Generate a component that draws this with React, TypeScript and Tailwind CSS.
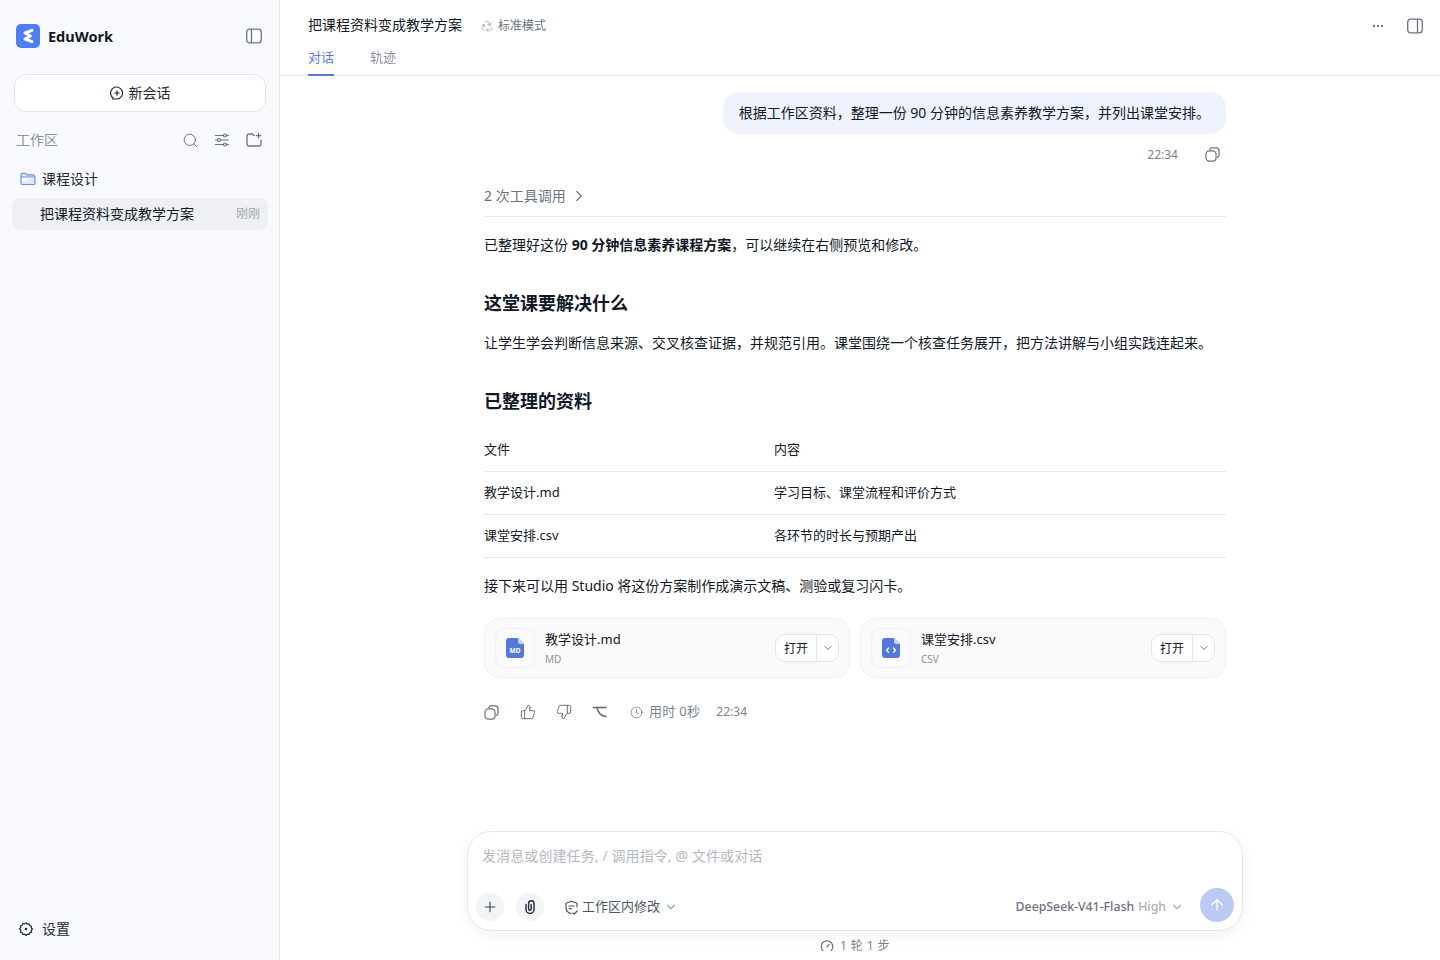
import { ArrowUp, ChevronDown, ChevronRight, Clock, Ellipsis, Plus, Recycle, Search, ThumbsDown, ThumbsUp } from "lucide-react";

const font = { fontFamily: '"Noto Sans", "Noto Sans CJK SC", sans-serif' };

const Logo = () => (
  <svg width="24" height="24" viewBox="0 0 24 24">
    <rect width="24" height="24" rx="5" fill="#4f7cf7" />
    <path d="M16 6.4 9 9l5.4 3L9 15l7 2.6" fill="none" stroke="#fff" strokeWidth="3" strokeLinecap="round" strokeLinejoin="round" />
  </svg>
);

const PanelIcon = ({ side }: { side: "left" | "right" }) => (
  <svg width="16" height="16" viewBox="0 0 16 16" fill="none" stroke="#6b7280" strokeWidth="1.3">
    <rect x="0.7" y="1.2" width="14.6" height="13.6" rx="3" />
    <path d={side === "left" ? "M5.5 1.2v13.6" : "M10.5 1.2v13.6"} />
  </svg>
);

const NewChatIcon = () => (
  <svg width="14" height="14" viewBox="0 0 14 14" fill="none" stroke="#1f2937" strokeWidth="1.2" strokeLinecap="round">
    <path d="M3.2 12A6 6 0 1 1 7 13H2.6" />
    <path d="M7 4.8v4.4M4.8 7h4.4" />
  </svg>
);

const SlidersIcon = () => (
  <svg width="16" height="16" viewBox="0 0 16 16" fill="none" stroke="#6b7280" strokeWidth="1.2" strokeLinecap="round">
    <path d="M1.5 3.5h8M12.5 3.5h2M1.5 8h2M6.5 8h8M1.5 12.5h8M12.5 12.5h2" />
    <circle cx="11" cy="3.5" r="1.5" />
    <circle cx="5" cy="8" r="1.5" />
    <circle cx="11" cy="12.5" r="1.5" />
  </svg>
);

const NewFolderIcon = () => (
  <svg width="16" height="16" viewBox="0 0 16 16" fill="none" stroke="#6b7280" strokeWidth="1.3" strokeLinecap="round" strokeLinejoin="round">
    <path d="M8.5 3.2H7.2L6 2H2.8A1.8 1.8 0 0 0 1 3.8v8.4A1.8 1.8 0 0 0 2.8 14h10.4a1.8 1.8 0 0 0 1.8-1.8V8.4" />
    <path d="M12.6 1.4v4.4M10.4 3.6h4.4" />
  </svg>
);

const FolderIcon = () => (
  <svg width="16" height="16" viewBox="0 0 16 16" fill="none" stroke="#6f8fe8" strokeWidth="1.2" strokeLinejoin="round">
    <path d="M1 12V4a1.6 1.6 0 0 1 1.6-1.6h3l1.4 1.4h6a1.6 1.6 0 0 1 1.6 1.6V6H1v6.2a1.4 1.4 0 0 0 1.4 1.3h11.2a1.4 1.4 0 0 0 1.4-1.3V6" fill="#dfe7fb" />
  </svg>
);

const CopyIcon = ({ size = 16 }: { size?: number }) => (
  <svg width={size} height={size} viewBox="0 0 16 16" fill="none" stroke="#6b7280" strokeWidth="1.3">
    <rect x="1" y="4.2" width="10.8" height="10.8" rx="3.6" />
    <path d="M5 2.6A2.6 2.6 0 0 1 7.4 1h4.4A3.2 3.2 0 0 1 15 4.2v4.4a2.6 2.6 0 0 1-1.6 2.4" strokeLinecap="round" />
  </svg>
);

const GearIcon = () => (
  <svg width="14" height="14" viewBox="0 0 14 14" fill="none" stroke="#1f2937" strokeWidth="1.2" strokeLinejoin="round">
    <path d="M7 .9l1.3 1.3 1.8-.3.7 1.7 1.7.7-.3 1.8L13.5 7l-1.3 1.3.3 1.8-1.7.7-.7 1.7-1.8-.3L7 13.5l-1.3-1.3-1.8.3-.7-1.7-1.7-.7.3-1.8L.5 7l1.3-1.3-.3-1.8 1.7-.7.7-1.7 1.8.3z" />
    <circle cx="7" cy="7" r="1.3" fill="#1f2937" stroke="none" />
  </svg>
);

const BranchIcon = () => (
  <svg width="16" height="16" viewBox="0 0 16 16" fill="none" stroke="#5f6672" strokeWidth="1.4" strokeLinecap="round" strokeLinejoin="round">
    <path d="M1.5 3.5h11" />
    <path d="M5 3.5c1 4.5 3.5 8 7.5 8.8" />
    <circle cx="13.6" cy="3.5" r="0.9" fill="#5f6672" stroke="none" />
    <circle cx="13.6" cy="12.4" r="0.9" fill="#5f6672" stroke="none" />
  </svg>
);

const ClipIcon = () => (
  <svg width="16" height="16" viewBox="0 0 16 16" fill="none" stroke="#1f2937" strokeWidth="1.4" strokeLinecap="round" strokeLinejoin="round">
    <path d="M4 5.5v5a4 4 0 0 0 8 0v-6a2.7 2.7 0 0 0-5.4 0V10a1.3 1.3 0 0 0 2.6 0V5.5" />
  </svg>
);

const ShieldIcon = () => (
  <svg width="15" height="15" viewBox="0 0 15 15" fill="none" stroke="#4b5563" strokeWidth="1.2" strokeLinecap="round" strokeLinejoin="round">
    <path d="M7.5 1.2l5.5 2v3.6M7 13.6C3.8 12.6 2 10.2 2 7.2v-4l5.5-2" />
    <path d="M5 6h5M5 8.6h2.4M9 13l1.2 1 3-3" />
  </svg>
);

const GaugeIcon = () => (
  <svg width="14" height="14" viewBox="0 0 14 14" fill="none" stroke="#6b7280" strokeWidth="1.2" strokeLinecap="round">
    <path d="M2.8 11.6A5.8 5.8 0 1 1 11.2 11.6" />
    <path d="M7 8l2.2-2.6" />
  </svg>
);

const FileIcon = ({ kind }: { kind: "md" | "csv" }) => (
  <svg width="18" height="20" viewBox="0 0 18 20">
    <path d="M3 0h9l6 6v11a3 3 0 0 1-3 3H3a3 3 0 0 1-3-3V3a3 3 0 0 1 3-3z" fill="#5578de" />
    <path d="M12 0l6 6h-4a2 2 0 0 1-2-2z" fill="#c5d3f7" />
    {kind === "md" ? (
      <text x="9" y="14.6" textAnchor="middle" fontSize="6.5" fontWeight="700" fill="#fff" fontFamily="Noto Sans">MD</text>
    ) : (
      <path d="M6.6 10 4.4 12.2l2.2 2.2M11.4 10l2.2 2.2-2.2 2.2" fill="none" stroke="#fff" strokeWidth="1.3" strokeLinecap="round" strokeLinejoin="round" />
    )}
  </svg>
);

const FileCard = ({ name, tag, kind }: { name: string; tag: string; kind: "md" | "csv" }) => (
  <div className="flex h-[60px] flex-1 items-center rounded-[16px] border border-[#efefef] bg-[#fafafa] pl-[10px] pr-[10px]">
    <div className="flex h-10 w-10 items-center justify-center rounded-[10px] border border-[#f0f0f0] bg-[#fafafa]">
      <FileIcon kind={kind} />
    </div>
    <div className="ml-[10px] flex-1">
      <div className="text-[13px] leading-[18px] text-[#111827]">{name}</div>
      <div className="mt-[3px] text-[10px] leading-[16px] text-[#8b93a1]">{tag}</div>
    </div>
    <div className="flex h-[28px] items-center rounded-[10px] border border-[#e5e5e5] bg-white">
      <span className="flex h-full w-[41px] items-center justify-center border-r border-[#e5e5e5] pt-[1px] text-[12px] text-[#111827]">打开</span>
      <span className="flex w-[21px] justify-center"><ChevronDown size={12} color="#6b7280" /></span>
    </div>
  </div>
);

const rows = [
  ["文件", "内容"],
  ["教学设计.md", "学习目标、课堂流程和评价方式"],
  ["课堂安排.csv", "各环节的时长与预期产出"],
];

export default function App() {
  return (
    <div className="flex h-screen overflow-hidden bg-white" style={font}>
      <aside className="flex w-[280px] shrink-0 flex-col border-r border-[#e5e7eb] bg-[#f8fafd]">
        <div className="flex h-[72px] items-center justify-between pl-4 pr-[17px]">
          <div className="flex items-center gap-2">
            <Logo />
            <span className="pt-[2px] text-[14.5px] font-bold text-[#111827]">EduWork</span>
          </div>
          <PanelIcon side="left" />
        </div>
        <div className="ml-[14px] mr-[13px] mt-[2px] flex h-[38px] items-center justify-center gap-[5px] rounded-[12px] border border-[#e2e4e8] bg-white text-[14px] text-[#1f2937]">
          <NewChatIcon />
          <span className="pb-[2px]">新会话</span>
        </div>
        <div className="mt-[18px] flex h-5 items-center justify-between pl-4 pr-[17px]">
          <span className="pb-[2px] text-[14px] text-[#8b93a1]">工作区</span>
          <div className="flex items-center gap-4">
            <Search size={17} color="#6b7280" strokeWidth={1.4} className="-mr-px" />
            <SlidersIcon />
            <NewFolderIcon />
          </div>
        </div>
        <div className="mt-[19px] flex h-5 items-center gap-[6px] pl-[20px] text-[14px] text-[#1f2937]">
          <FolderIcon />
          <span className="pb-[2px]">课程设计</span>
        </div>
        <div className="ml-3 mr-[11px] mt-[9px] flex h-8 items-center justify-between rounded-[8px] bg-[#eef0f3] pl-7 pr-2 text-[14px] text-[#111827]">
          <span className="pb-[2px]">把课程资料变成教学方案</span>
          <span className="text-[12px] text-[#a3a8b0]">刚刚</span>
        </div>
        <div className="mb-[21px] mt-auto flex h-5 items-center gap-[9px] pl-[19px] text-[14px] text-[#1f2937]">
          <GearIcon />
          <span className="pb-[2px]">设置</span>
        </div>
      </aside>

      <main className="flex min-w-0 flex-1 flex-col">
        <header className="h-[76px] shrink-0 border-b border-[#e5e7eb] pl-7 pr-[17px]">
          <div className="flex h-[50px] items-center pt-[2px]">
            <span className="pb-[4px] text-[14px] text-[#111827]">把课程资料变成教学方案</span>
            <span className="ml-[18px] flex items-center gap-[4px] text-[12px] text-[#6b7280]">
              <Recycle size={14} color="#9ca3af" strokeWidth={1.3} />
              标准模式
            </span>
            <span className="ml-auto flex items-center gap-[22px]">
              <Ellipsis size={14} color="#6b7280" />
              <PanelIcon side="right" />
            </span>
          </div>
          <div className="flex gap-9 text-[13px]">
            <span className="h-[26px] border-b-2 border-[#5a78e0] leading-[15px] text-[#5a78e0]">对话</span>
            <span className="leading-[15px] text-[#8b93a1]">轨迹</span>
          </div>
        </header>

        <div className="min-h-0 flex-1 overflow-hidden pr-[10px]">
          <div className="mx-auto w-[742px] pt-4 text-[14px] text-[#111827]">
            <div className="flex justify-end">
              <div className="flex h-[42px] items-center rounded-[16px] bg-[#edf2fd] px-4 pb-[2px]">根据工作区资料，整理一份 90 分钟的信息素养教学方案，并列出课堂安排。</div>
            </div>
            <div className="mt-[10px] flex h-5 items-center justify-end gap-[27px] pr-[6px] text-[12px] text-[#7b8390]">
              <span className="pt-[2px]">22:34</span>
              <CopyIcon size={15} />
            </div>
            <div className="mt-[22px] border-b border-[#e5e7eb] pb-[10px]">
              <div className="flex h-5 items-center gap-[4px] text-[#6b7280]">
                <span className="pb-[2px]">2 次工具调用</span>
                <ChevronRight size={18} strokeWidth={1.5} />
              </div>
            </div>
            <p className="mt-4 leading-6">已整理好这份 <strong className="font-bold">90 分钟信息素养课程方案</strong>，可以继续在右侧预览和修改。</p>
            <h2 className="mt-8 text-[18px] font-bold leading-7">这堂课要解决什么</h2>
            <p className="mt-[14px] leading-6">让学生学会判断信息来源、交叉核查证据，并规范引用。课堂围绕一个核查任务展开，把方法讲解与小组实践连起来。</p>
            <h2 className="mt-8 text-[18px] font-bold leading-7">已整理的资料</h2>
            <div className="mt-[14px] text-[13px]">
              {rows.map((r) => (
                <div key={r[0]} className="grid h-[43px] grid-cols-[290px_1fr] items-center border-b border-[#e5e7eb]">
                  <span>{r[0]}</span>
                  <span>{r[1]}</span>
                </div>
              ))}
            </div>
            <p className="mt-4 leading-6">接下来可以用 Studio 将这份方案制作成演示文稿、测验或复习闪卡。</p>
            <div className="mt-5 flex gap-[10px]">
              <FileCard name="教学设计.md" tag="MD" kind="md" />
              <FileCard name="课堂安排.csv" tag="CSV" kind="csv" />
            </div>
            <div className="mt-6 flex h-5 items-center text-[12px] text-[#7b8390]">
              <CopyIcon size={15} />
              <span className="ml-[21px]"><ThumbsUp size={16} color="#5f6672" strokeWidth={1.4} /></span>
              <span className="ml-[20px]"><ThumbsDown size={16} color="#5f6672" strokeWidth={1.4} /></span>
              <span className="ml-[20px]"><BranchIcon /></span>
              <span className="ml-[22px] flex items-center gap-[6px] text-[13px] tracking-[0.3px]"><Clock size={13} color="#6b7280" strokeWidth={1.4} />用时 0秒</span>
              <span className="ml-4">22:34</span>
            </div>
          </div>
        </div>

        <div className="shrink-0 pr-[10px]">
          <div className="mx-auto h-[100px] w-[776px] rounded-[24px] border border-[#e8e8e8] bg-white shadow-[0_4px_16px_rgba(0,0,0,0.05)]">
            <div className="pl-[14px] pt-[14px] text-[14px] leading-5 tracking-[0.1px] text-[#b4b8bf]">发消息或创建任务, / 调用指令, @ 文件或对话</div>
            <div className="mt-[22px] flex items-start pl-[8px] pr-[8px]">
              <span className="mt-[5px] flex h-7 w-7 items-center justify-center rounded-full bg-[#f3f4f6]"><Plus size={16} color="#374151" strokeWidth={1.6} /></span>
              <span className="ml-3 mt-[5px] flex h-7 w-7 items-center justify-center rounded-full bg-[#f3f4f6]"><ClipIcon /></span>
              <span className="ml-[20px] mt-[5px] flex h-7 items-center gap-[3px] text-[13px] text-[#4b5563]">
                <ShieldIcon />
                工作区内修改
                <ChevronDown size={14} color="#9ca3af" className="ml-[1px]" />
              </span>
              <span className="ml-auto mt-[5px] flex h-7 items-center text-[12.3px] font-medium text-[#6b7280]">
                DeepSeek-V41-Flash
                <span className="ml-[4px] text-[#a9aeb6]">High</span>
                <ChevronDown size={14} color="#a9aeb6" className="ml-[4px]" />
              </span>
              <span className="ml-[16px] flex h-[34px] w-[34px] items-center justify-center rounded-full bg-[#bccbf3]"><ArrowUp size={18} color="#fff" strokeWidth={1.6} /></span>
            </div>
          </div>
          <div className="flex h-[29px] items-center justify-center gap-[6px] text-[12px] tracking-[0.4px] text-[#7b8390]">
            <GaugeIcon />
            1 轮 1 步
          </div>
        </div>
      </main>
    </div>
  );
}
